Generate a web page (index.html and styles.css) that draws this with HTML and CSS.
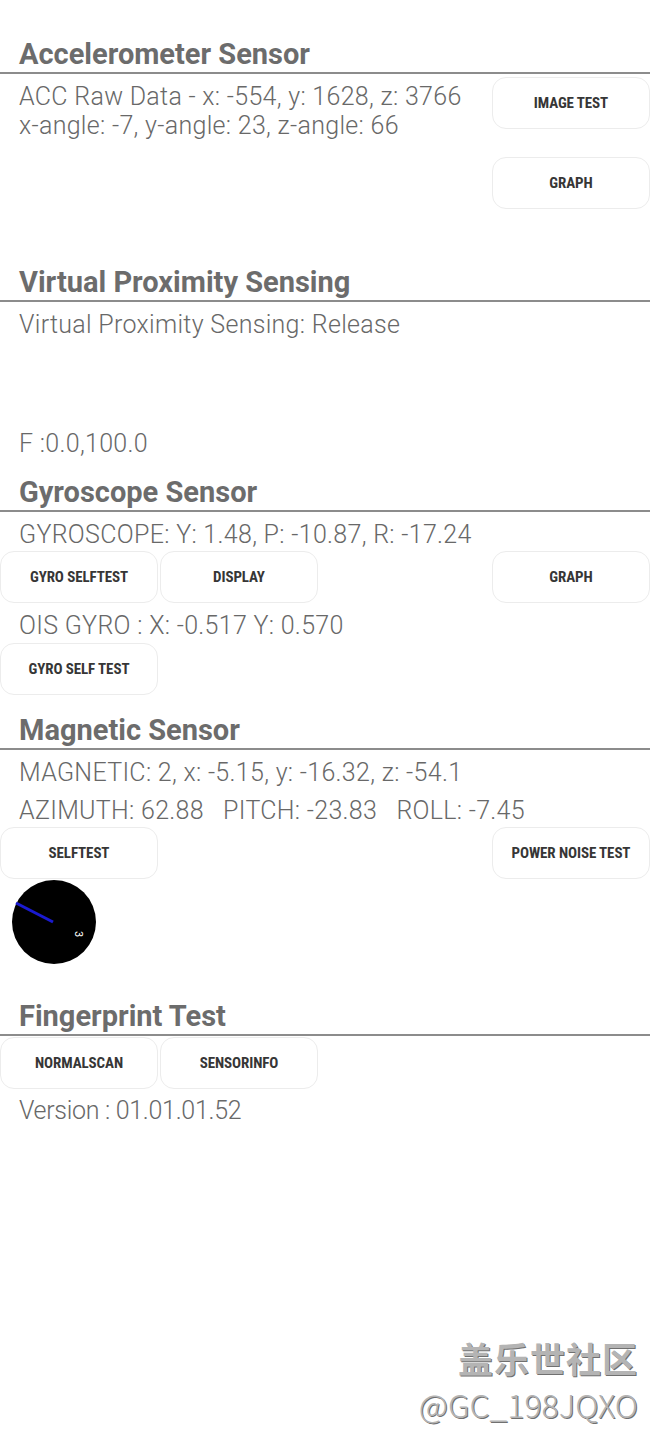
FILE: index.html
```html
<!DOCTYPE html>
<html lang="en">
<head>
<meta charset="utf-8">
<title>Sensor Test</title>
<link rel="stylesheet" href="styles.css">
</head>
<body>
<main class="page">
  <section class="sec">
    <h2 class="sec-title">Accelerometer Sensor</h2>
    <div class="acc-body">
      <div class="text-col">
        <p class="line">ACC Raw Data - x: -554, y: 1628, z: 3766</p>
        <p class="line">x-angle: -7, y-angle: 23, z-angle: 66</p>
      </div>
      <div class="btn-col">
        <button class="btn">IMAGE TEST</button>
        <button class="btn">GRAPH</button>
      </div>
    </div>
  </section>

  <section class="sec">
    <h2 class="sec-title">Virtual Proximity Sensing</h2>
    <div class="prox-body">
      <p class="line">Virtual Proximity Sensing: Release</p>
      <p class="line prox-f">F :0.0,100.0</p>
    </div>
  </section>

  <section class="sec">
    <h2 class="sec-title">Gyroscope Sensor</h2>
    <div class="gyro-body">
      <p class="line">GYROSCOPE: Y: 1.48, P: -10.87, R: -17.24</p>
      <div class="btn-row gyro-row">
        <button class="btn">GYRO SELFTEST</button>
        <button class="btn">DISPLAY</button>
        <button class="btn btn-right">GRAPH</button>
      </div>
      <p class="line ois-line">OIS GYRO : X: -0.517 Y: 0.570</p>
      <div class="btn-row ois-row">
        <button class="btn">GYRO SELF TEST</button>
      </div>
    </div>
  </section>

  <section class="sec">
    <h2 class="sec-title">Magnetic Sensor</h2>
    <div class="mag-body">
      <p class="line">MAGNETIC: 2, x: -5.15, y: -16.32, z: -54.1</p>
      <p class="line mag-orient">AZIMUTH: 62.88   PITCH: -23.83   ROLL: -7.45</p>
      <div class="btn-row mag-row">
        <button class="btn">SELFTEST</button>
        <button class="btn btn-right">POWER NOISE TEST</button>
      </div>
      <div class="compass">
        <svg width="84" height="84" viewBox="0 0 84 84">
          <circle cx="42" cy="42" r="42" fill="#000"/>
          <line x1="4" y1="23" x2="41" y2="42" stroke="#1a1ad0" stroke-width="3"/>
          <text x="66" y="54" fill="#fff" font-family="Roboto, sans-serif" font-size="11" text-anchor="middle" dominant-baseline="central" transform="rotate(90 66 54)">3</text>
        </svg>
      </div>
    </div>
  </section>

  <section class="sec">
    <h2 class="sec-title">Fingerprint Test</h2>
    <div class="fp-body">
      <div class="btn-row fp-row">
        <button class="btn">NORMALSCAN</button>
        <button class="btn">SENSORINFO</button>
      </div>
      <p class="line fp-version">Version : 01.01.01.52</p>
    </div>
  </section>

  <div class="watermark">
    <div class="wm-cn">盖乐世社区</div>
    <div class="wm-id">@GC_198JQXO</div>
  </div>
</main>
</body>
</html>
```

FILE: styles.css
```css
html, body {
  margin: 0;
  padding: 0;
  background: #ffffff;
}

.page {
  position: relative;
  width: 650px;
  min-height: 1444px;
  padding-top: 36px;
  box-sizing: border-box;
  font-family: Roboto, "Noto Sans", sans-serif;
}

.sec-title {
  margin: 0;
  padding-left: 19px;
  font-size: 29px;
  line-height: 36px;
  font-weight: 700;
  color: #6c6c6c;
  border-bottom: 2px solid #8c8c8c;
}

.line {
  margin: 0;
  padding-left: 19px;
  font-size: 25px;
  line-height: 29px;
  font-weight: 300;
  letter-spacing: 0.3px;
  color: #686868;
  white-space: pre;
}

.btn {
  width: 158px;
  height: 52px;
  padding: 0;
  background: #ffffff;
  border: 1px solid #ececec;
  border-radius: 14px;
  font-family: "Roboto Condensed", "Liberation Sans Narrow", Roboto, sans-serif;
  font-stretch: condensed;
  font-weight: 700;
  font-size: 15px;
  color: #363636;
  letter-spacing: -0.1px;
}

.btn-row {
  display: flex;
  gap: 2px;
}

.btn-right {
  margin-left: auto;
}

/* Accelerometer */
.acc-body {
  display: flex;
  justify-content: space-between;
  padding-bottom: 55px;
}

.text-col {
  padding-top: 8px;
}

.btn-col {
  display: flex;
  flex-direction: column;
  gap: 28px;
  padding-top: 3px;
}

/* Proximity */
.prox-body {
  padding-top: 8px;
  padding-bottom: 16px;
}

.prox-f {
  margin-top: 90px;
}

/* Gyroscope */
.gyro-body {
  padding-top: 8px;
  padding-bottom: 17px;
}

.gyro-row {
  margin-top: 2px;
}

.ois-line {
  margin-top: 8px;
}

.ois-row {
  margin-top: 3px;
}

/* Magnetic */
.mag-body {
  padding-top: 8px;
  padding-bottom: 34px;
}

.mag-orient {
  margin-top: 9px;
}

.mag-row {
  margin-top: 2px;
}

.compass {
  margin-top: 1px;
  margin-left: 12px;
  width: 84px;
  height: 84px;
}

.compass svg {
  display: block;
}

/* Fingerprint */
.fp-row {
  margin-top: 1px;
}

.fp-version {
  margin-top: 7px;
  letter-spacing: -0.3px;
}

/* Watermark overlay */
.watermark {
  position: absolute;
  right: 12px;
  top: 1334px;
  text-align: right;
  font-family: "Noto Sans CJK SC", "Noto Sans", sans-serif;
  color: #b4b4b4;
  text-shadow: 1px 1px 0 #707070;
}

.wm-cn {
  font-size: 35px;
  line-height: 48px;
  font-weight: 700;
  letter-spacing: 1px;
}

.wm-id {
  font-size: 32px;
  line-height: 44px;
  font-weight: 300;
}
```
